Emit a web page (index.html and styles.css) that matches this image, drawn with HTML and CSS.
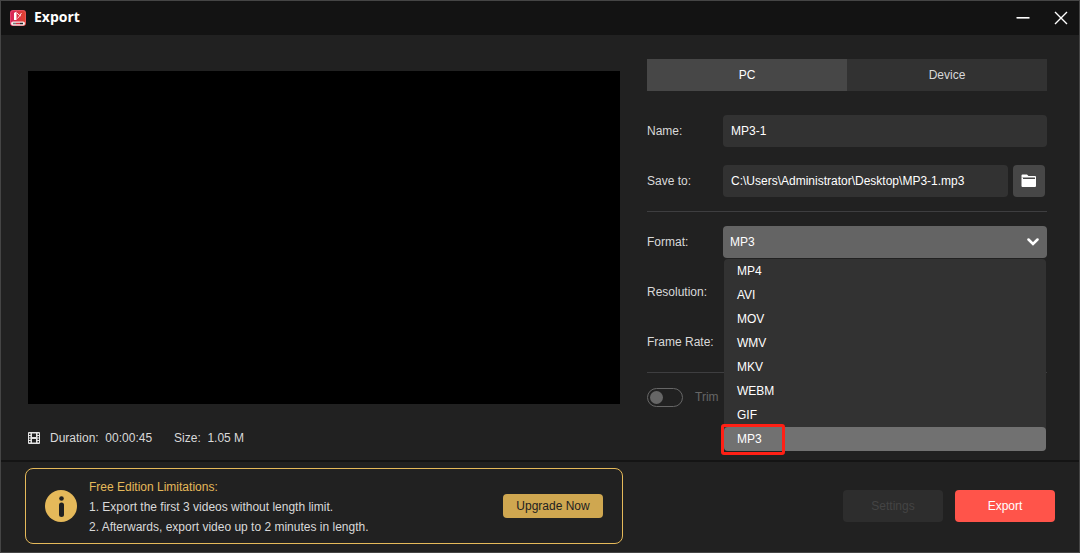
FILE: index.html
```html
<!DOCTYPE html>
<html lang="en">
<head>
<meta charset="utf-8">
<title>Export</title>
<link rel="stylesheet" href="styles.css">
</head>
<body>
<div class="window">
  <header class="titlebar">
    <svg class="logo" width="16" height="16" viewBox="0 0 16 16" aria-hidden="true">
      <defs><linearGradient id="lg"><stop offset="0" stop-color="#d81f5c"/><stop offset="1" stop-color="#e2462c"/></linearGradient></defs>
      <rect width="16" height="16" rx="3" fill="url(#lg)"/>
      <rect x=".5" y=".5" width="15" height="15" rx="3" fill="none" stroke="#e8607c" stroke-opacity=".6"/>
      <path d="M4 3 6.500 1.500V10H4z" fill="#fff"/>
      <path d="M7 3l2 2M7.500 8.500 9.500 6l2-3M9 5l2 1" stroke="#ffd9dc" stroke-width="1" fill="none"/>
      <rect x="1" y="11.500" width="14" height="4" rx="2" fill="#f3e6e6"/>
      <path d="M3 13.500h3" stroke="#777" stroke-width="1.500"/>
      <path d="M6 13.500h4" stroke="#d52a3c" stroke-width="1.500"/>
      <path d="M10 13.500h3" stroke="#222" stroke-width="1.500"/>
    </svg>
    <h1 class="title">Export</h1>
    <button class="winbtn" type="button" aria-label="Minimize">
      <svg width="14" height="14" viewBox="0 0 14 14"><path d="M.5 6.800h13" stroke="#fff" stroke-width="1.600"/></svg>
    </button>
    <button class="winbtn" type="button" aria-label="Close">
      <svg width="14" height="14" viewBox="0 0 14 14"><path d="M1 1l12 12M13 1 1 13" stroke="#fff" stroke-width="1.400"/></svg>
    </button>
  </header>

  <main class="main">
    <section class="preview">
      <div class="video"></div>
      <div class="info">
        <svg width="12" height="12" viewBox="0 0 12 12" aria-hidden="true">
          <rect width="12" height="12" rx="1" fill="#e4e4e4"/>
          <path d="M4 1.500h4v3.500H4zM4 7h4v3.500H4zM1 1.500h1.500V3H1zM1 4h1.500v1.500H1zM1 6.500h1.500V8H1zM1 9h1.500v1.500H1zM9.500 1.500H11V3H9.500zM9.500 4H11v1.500H9.500zM9.500 6.500H11V8H9.500zM9.500 9H11v1.500H9.500z" fill="#212121"/>
        </svg>
        <span class="duration">Duration:&nbsp; 00:00:45</span>
        <span>Size:&nbsp; 1.05 M</span>
      </div>
    </section>

    <form class="options">
      <div class="tabs" role="tablist">
        <button class="tab tab-active" type="button" role="tab" aria-selected="true">PC</button>
        <button class="tab" type="button" role="tab" aria-selected="false">Device</button>
      </div>
      <div class="group">
        <div class="row">
          <label class="label" for="name">Name:</label>
          <input class="field" id="name" type="text" value="MP3-1">
        </div>
        <div class="row">
          <label class="label" for="path">Save to:</label>
          <div class="path">
            <input class="field" id="path" type="text" value="C:\Users\Administrator\Desktop\MP3-1.mp3">
            <button class="browse" type="button" aria-label="Browse">
              <svg width="16" height="14" viewBox="0 0 16 14"><path d="M1.500.5h4.500L7.500 2H14q1 0 1 1v.5H.5v-2q0-1 1-1z" fill="#fff"/><path d="M.5 3.500h1.500V5h13v7q0 1-1 1H1.500q-1 0-1-1zM14 3h1v2.500h-1z" fill="#fff"/></svg>
            </button>
          </div>
        </div>
      </div>
      <div class="group">
        <div class="row">
          <label class="label" for="format">Format:</label>
          <div class="combo">
            <select class="select" id="format">
              <option>MP3</option>
            </select>
            <svg class="chevron" width="12" height="8" viewBox="0 0 12 8" aria-hidden="true"><path d="M1.500 1.500 6 6l4.500-4.500" fill="none" stroke="#fff" stroke-width="2.500" stroke-linecap="round"/></svg>
            <ul class="menu" role="listbox" aria-label="Format">
              <li class="item" role="option">MP4</li>
              <li class="item" role="option">AVI</li>
              <li class="item" role="option">MOV</li>
              <li class="item" role="option">WMV</li>
              <li class="item" role="option">MKV</li>
              <li class="item" role="option">WEBM</li>
              <li class="item" role="option">GIF</li>
              <li class="item item-active" role="option" aria-selected="true">MP3<span class="highlight"></span></li>
            </ul>
          </div>
        </div>
        <div class="row"><span class="label">Resolution:</span></div>
        <div class="row"><span class="label">Frame Rate:</span></div>
      </div>
      <div class="trim">
        <input class="toggle" id="trim" type="checkbox" disabled>
        <label for="trim">Trim</label>
      </div>
    </form>
  </main>

  <footer class="footer">
    <section class="notice">
      <svg width="32" height="32" viewBox="0 0 32 32" aria-hidden="true"><circle cx="16" cy="16" r="16" fill="#e5b95a"/><circle cx="16.500" cy="8.500" r="2.300" fill="#212121"/><rect x="14" y="12.500" width="5" height="14.500" rx="2.500" fill="#212121"/></svg>
      <div class="notice-text">
        <p class="notice-title">Free Edition Limitations:</p>
        <p>1. Export the first 3 videos without length limit.</p>
        <p>2. Afterwards, export video up to 2 minutes in length.</p>
      </div>
      <button class="upgrade" type="button">Upgrade Now</button>
    </section>
    <div class="actions">
      <button class="action" type="button" disabled>Settings</button>
      <button class="action action-primary" type="button">Export</button>
    </div>
  </footer>
</div>
</body>
</html>
```
FILE: styles.css
```css
* { box-sizing: border-box; }
body, h1, p, ul { margin: 0; padding: 0; }
body {
  background: #212121;
  color: #d9d9d9;
  font-family: "Liberation Sans", Arial, sans-serif;
  font-size: 12px;
  line-height: 20px;
}
button, input, select { font: inherit; color: inherit; border: 0; margin: 0; }
button { padding: 0; }
svg { display: block; flex: none; }

.window {
  min-height: 100vh;
  display: flex;
  flex-direction: column;
  border: 1px solid #454545;
}
.titlebar {
  display: flex;
  align-items: center;
  gap: 2px;
  height: 34px;
  padding-left: 9px;
  background: #131313;
}
.title {
  flex: 1;
  margin-left: 6px;
  padding-bottom: 2px;
  color: #fff;
  font: bold 14px/20px "Open Sans", "Noto Sans", sans-serif;
}
.winbtn {
  display: flex;
  align-items: center;
  justify-content: center;
  width: 36px;
  height: 32px;
  background: none;
}

.main {
  flex: 1;
  display: flex;
  gap: 27px;
  padding: 24px 32px 12px 27px;
}
.preview {
  flex: 1;
  display: flex;
  flex-direction: column;
  padding-top: 12px;
}
.video { flex: 1; background: #000; }
.info {
  display: flex;
  align-items: center;
  padding-top: 24px;
}
.duration { margin: 0 22px 0 10px; }

.options { width: 400px; }
.tabs { display: flex; margin-bottom: 24px; }
.tab { flex: 1; height: 32px; background: #323232; }
.tab-active { background: #474747; color: #fff; }
.group {
  display: flex;
  flex-direction: column;
  gap: 18px;
  margin-bottom: 14px;
  padding-bottom: 14px;
  border-bottom: 1px solid #3e3e40;
}
.row { display: flex; align-items: center; height: 32px; }
.label { width: 76px; }
.field {
  flex: 1;
  min-width: 0;
  height: 32px;
  padding: 0 8px;
  border-radius: 4px;
  background: #323232;
  color: #fff;
}
.path { flex: 1; display: flex; gap: 5px; padding-right: 2px; }
.browse {
  display: flex;
  align-items: center;
  justify-content: center;
  width: 32px;
  height: 32px;
  border-radius: 4px;
  background: #474747;
}

.combo { position: relative; flex: 1; }
.select {
  display: block;
  appearance: none;
  width: 100%;
  height: 32px;
  padding: 0 7px;
  border-radius: 4px;
  background: #646464;
  color: #fff;
}
.chevron { position: absolute; top: 12px; right: 8px; }
.menu {
  position: absolute;
  top: 33px;
  left: 1px;
  right: 1px;
  z-index: 1;
  list-style: none;
  border-radius: 4px;
  background: #323232;
  color: #fff;
}
.item { height: 24px; padding-left: 13px; line-height: 24px; }
.item-active { position: relative; border-radius: 4px; background: #717171; }
.highlight {
  position: absolute;
  top: -3px;
  left: -3px;
  width: 64px;
  height: 31px;
  border: 3px solid #ff2015;
  border-radius: 3px;
}

.trim {
  display: flex;
  align-items: center;
  gap: 12px;
  color: #666;
}
.toggle {
  appearance: none;
  display: flex;
  align-items: center;
  width: 36px;
  height: 19px;
  padding: 0 2px;
  border: 1px solid #666;
  border-radius: 10px;
}
.toggle::before {
  content: "";
  width: 13px;
  height: 13px;
  border-radius: 50%;
  background: #666;
}

.footer {
  display: flex;
  align-items: center;
  justify-content: space-between;
  padding: 6px 24px 8px;
  border-top: 2px solid #141414;
}
.notice {
  display: flex;
  align-items: center;
  width: 598px;
  padding: 6px 19px;
  border: 1px solid #e5b95a;
  border-radius: 8px;
}
.notice-text { flex: 1; margin: 2px 0 0 12px; }
.notice-title { color: #e5b95a; }
.upgrade {
  width: 100px;
  height: 24px;
  border-radius: 4px;
  background: #cfa750;
  color: #212121;
}
.actions { display: flex; gap: 12px; }
.action {
  width: 100px;
  height: 32px;
  border-radius: 4px;
  background: #2d2d2d;
  color: #444;
}
.action-primary { background: #ff544a; color: #fff; }
```
